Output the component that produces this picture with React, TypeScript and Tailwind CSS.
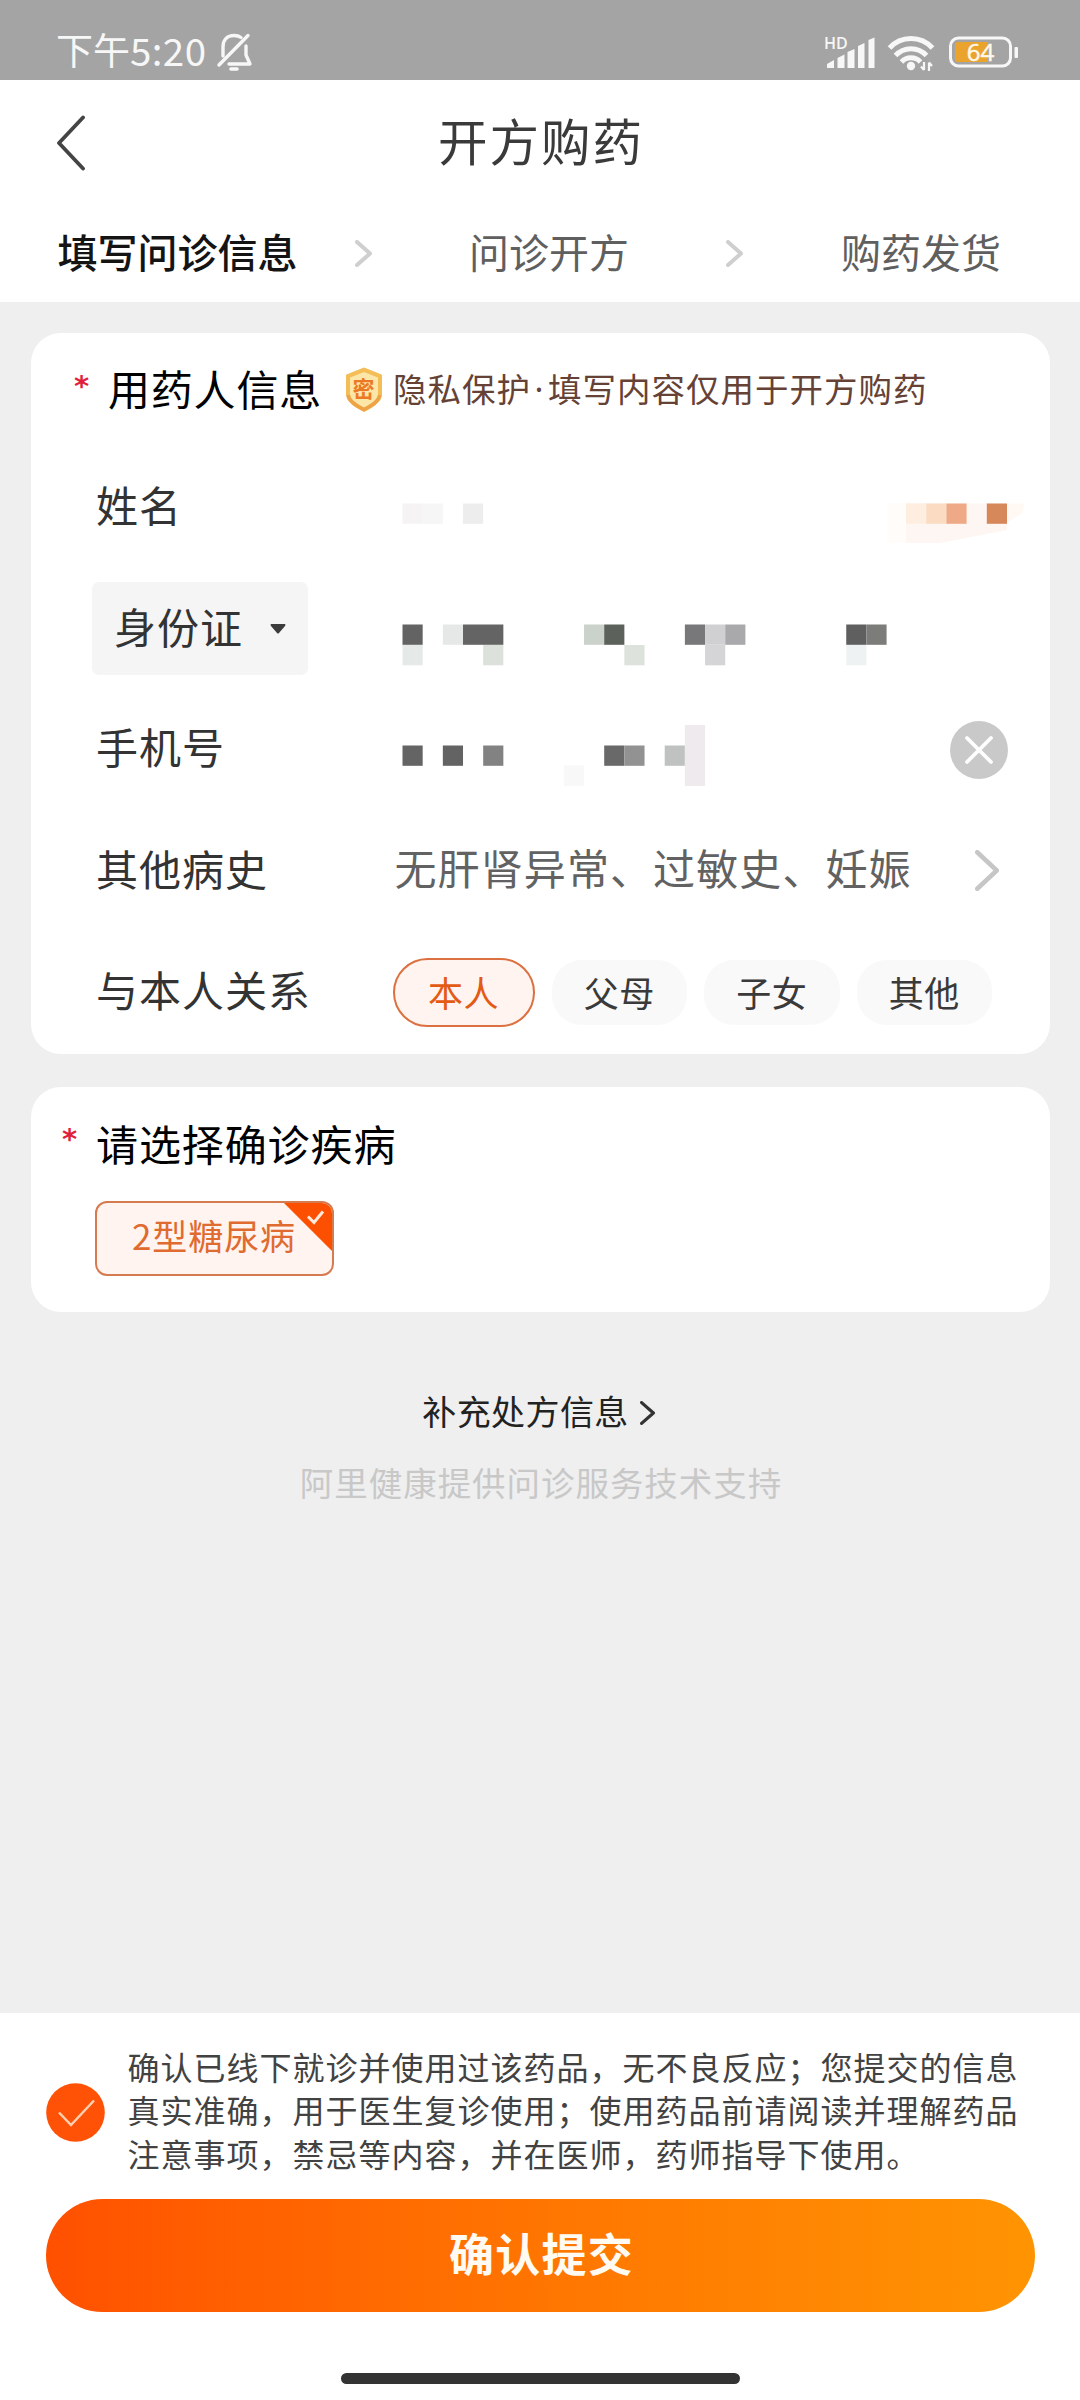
import type { ReactNode } from "react";

const CELL = 20.17;

type Cell = { col: number; y: number; fill: string; w?: number; h?: number };

const nameCells: Cell[] = [
  { col: 0, y: 60.5, fill: "#f5f3f4" },
  { col: 1, y: 60.5, fill: "#f6f6f6" },
  { col: 3, y: 60.5, fill: "#ededed" },
];

const idCells: Cell[] = [
  { col: 0, y: 59.5, fill: "#636363" },
  { col: 2, y: 59.5, fill: "#e6e8e8" },
  { col: 3, y: 59.5, fill: "#646464", w: 2 },
  { col: 9, y: 59.5, fill: "#cbd1cb" },
  { col: 10, y: 59.5, fill: "#5c625b" },
  { col: 14, y: 59.5, fill: "#78787b" },
  { col: 15, y: 59.5, fill: "#d0d0d3" },
  { col: 16, y: 59.5, fill: "#a9a9ab" },
  { col: 22, y: 59.5, fill: "#5f5f5f" },
  { col: 23, y: 59.5, fill: "#7c7c7b" },
  { col: 0, y: 80, fill: "#e5e9e8" },
  { col: 4, y: 80, fill: "#dce1dc" },
  { col: 11, y: 80, fill: "#dde2dd" },
  { col: 15, y: 80, fill: "#d5d5d8" },
  { col: 22, y: 80, fill: "#eff2f2" },
];

const phoneCells: Cell[] = [
  { col: 0, y: 59.5, fill: "#646464" },
  { col: 2, y: 59.5, fill: "#636363" },
  { col: 4, y: 59.5, fill: "#828282" },
  { col: 8, y: 79.5, fill: "#f8f8f8" },
  { col: 10, y: 59.5, fill: "#696969" },
  { col: 11, y: 59.5, fill: "#929292" },
  { col: 13, y: 59.5, fill: "#c0c2c2" },
  { col: 14, y: 39, fill: "#efeaed", h: 3 },
];

function Mosaic({ cells, width }: { cells: Cell[]; width: number }) {
  return (
    <svg width={width} height="121" viewBox={`0 0 ${width} 121`} className="shrink-0">
      {cells.map((c, i) => (
        <rect
          key={i}
          x={0.5 + c.col * CELL}
          y={c.y}
          width={(c.w ?? 1) * CELL}
          height={(c.h ?? 1) * 20.3}
          fill={c.fill}
        />
      ))}
    </svg>
  );
}

function Chevron({ w, h, color, stroke }: { w: number; h: number; color: string; stroke: number }) {
  const p = stroke / 2;
  return (
    <svg width={w} height={h} viewBox={`0 0 ${w} ${h}`} fill="none" className="shrink-0">
      <path
        d={`M${p} ${p}L${w - p - 1} ${h / 2}L${p} ${h - p}`}
        stroke={color}
        strokeWidth={stroke}
        strokeLinecap="round"
        strokeLinejoin="round"
      />
    </svg>
  );
}

function StatusBar() {
  return (
    <div className="flex h-[80px] shrink-0 items-start bg-[#a4a4a4] text-[#f7f7f7]">
      <div className="ml-[56px] mt-[28px] flex items-center whitespace-nowrap text-[37px] leading-[42px]">
        下午<span className="text-[38.5px] tracking-[0.4px]">5:20</span>
      </div>
      <svg className="ml-[10px] mt-[32px]" width="38" height="40" viewBox="0 0 38 40" fill="none" stroke="currentColor" strokeWidth="3.4" strokeLinecap="round" strokeLinejoin="round">
        <path d="M7 24V15C7 8 11 3.500 18 3.500C21 3.500 23 4 25 5.500" />
        <path d="M30 14V23L34 32H13" />
        <path d="M32 3.500L3 33" />
        <path d="M15 37H21" strokeWidth="3.600" />
      </svg>
      <div className="ml-auto mr-[59px] mt-[35px] flex items-start">
        <div className="flex w-[52px] items-start">
          <span className="-mt-[2px] w-0 whitespace-nowrap font-['Open_Sans'] text-[16px] font-semibold leading-[20px]">HD</span>
          <svg width="52" height="36" viewBox="0 0 52 36" fill="currentColor">
            <path d="M3 33V29L10 25V33Z" />
            <path d="M13.500 33V23L20.500 19.500V33Z" />
            <path d="M23.500 33V17L30.500 14V33Z" />
            <path d="M34 33V11L40.500 8V33Z" />
            <path d="M44.500 33V5L50.500 2.500V33Z" />
          </svg>
        </div>
        <svg className="ml-[11px]" width="50" height="38" viewBox="0 0 50 38" fill="none" stroke="currentColor" strokeWidth="5">
          <path d="M2.500 13A29 29 0 0 1 45.500 13" />
          <path d="M8.500 20.500A21 21 0 0 1 39.500 20.500" />
          <path d="M14.500 27A13 13 0 0 1 33.500 27" />
          <circle cx="24" cy="31" r="4.200" fill="currentColor" stroke="none" />
          <path d="M37 27V35M34 31.500L37 35M42 36V27.500M45 31L42 27.500" strokeWidth="2.200" />
        </svg>
        <svg className="ml-[12px] overflow-visible" width="72" height="34" viewBox="0 0 72 34" fill="none">
          <rect x="1.500" y="3" width="60" height="28" rx="8" stroke="#f7f7f7" strokeWidth="3" />
          <path d="M9 7H39V27H9Q6 27 6 24V10Q6 7 9 7Z" fill="#eaa32d" />
          <rect x="65.500" y="12" width="3.500" height="11" rx="1" fill="#f7f7f7" />
          <text x="31.500" y="26" fontSize="24" textAnchor="middle" fill="#fff8e8" stroke="#fff8e8" strokeWidth="0.500" fontFamily="Open Sans, sans-serif">64</text>
        </svg>
      </div>
    </div>
  );
}

function Header() {
  return (
    <div className="h-[222px] shrink-0 bg-white">
      <div className="grid h-[122px] grid-cols-[1fr_auto_1fr] items-center">
        <svg className="ml-[56px] mt-[4px]" width="30" height="56" viewBox="0 0 30 56" fill="none">
          <path d="M27 2.500L3 28L27 53.500" stroke="#444" strokeWidth="3.800" strokeLinecap="round" strokeLinejoin="round" />
        </svg>
        <h1 className="-mt-[2px] ml-[2px] text-[49.500px] leading-[60px] tracking-[2px] text-[#3a3a3a]">开方购药</h1>
      </div>
      <div className="flex h-[98px] items-center whitespace-nowrap pl-[57.500px] text-[40px] text-[#5f5f5f]">
        <span className="w-[297.500px] font-medium text-[#141414]">填写问诊信息</span>
        <span className="mt-[5px] w-[114px]"><Chevron w={18} h={27} color="#cfcfcf" stroke={4} /></span>
        <span className="w-[257px]">问诊开方</span>
        <span className="mt-[5px] w-[115px]"><Chevron w={18} h={27} color="#cfcfcf" stroke={4} /></span>
        <span>购药发货</span>
      </div>
    </div>
  );
}

function Row({ label, children }: { label: ReactNode; children: ReactNode }) {
  return (
    <div className="flex h-[121.4px] items-center whitespace-nowrap">
      <div className="w-[305px] shrink-0 pl-[65px] text-[42px] leading-[60px] tracking-[1px] text-[#333]">{label}</div>
      {children}
    </div>
  );
}

function Shield() {
  return (
    <svg className="mt-[4px] shrink-0" width="40" height="46" viewBox="0 0 40 46">
      <path d="M20 1L37.500 8V27C37.500 35 29 40 20 44.500C11 40 2.500 35 2.500 27V8Z" fill="#f4bd55" stroke="#f4bd55" strokeLinejoin="round" />
      <path d="M20 5L34 10.500V27C34 33 27 37 20 40.500C13 37 6 33 6 27V10.500Z" fill="#fce6a8" />
      <path d="M2.500 28C3 35 11 40 20 44.500C29 40 37 35 37.500 28L34 28C33 33 27 37 20 40.500C13 37 7 33 6 28Z" fill="#eea347" />
      <text x="20" y="30" fontSize="22" fontWeight="700" textAnchor="middle" fill="#ec7a25" fontFamily="Noto Sans CJK SC, sans-serif">密</text>
    </svg>
  );
}

const relations = ["父母", "子女", "其他"];

function PatientCard() {
  return (
    <section className="ml-[31px] mr-[30px] mt-[31px] h-[721px] shrink-0 rounded-[30px] bg-white">
      <div className="flex h-[110px] items-center whitespace-nowrap">
        <span className="-mt-[5px] ml-[43px] w-[34px] font-['DejaVu_Sans'] text-[29px] font-bold leading-[40px] text-[#e01f3d]">*</span>
        <h2 className="w-[216px] text-[42px] leading-[60px] tracking-[0.800px] text-black">用药人信息</h2>
        <div className="ml-[20px] flex items-center text-[33.500px] leading-[48px] tracking-[1px] text-[#664236]">
          <Shield />
          <span className="ml-[9px]">隐私保护</span>
          <span className="w-[17px] text-center font-['Noto_Sans']">·</span>
          <span>填写内容仅用于开方购药</span>
        </div>
      </div>
      <Row label="姓名">
        <div className="flex pl-[66px]">
          <Mosaic cells={nameCells} width={470} />
          <svg width="160" height="121" viewBox="872 0 160 121">
            <path d="M887 60.500H1007V84L960 92L906 100H887Z" fill="#fffcfa" />
            <path d="M906 60.500H1007V87L940 100H906Z" fill="#fef6f2" />
            <path d="M1007 60.500H1025L1022 70L1007 80Z" fill="#fff8f3" />
            <rect x="906" y="60.500" width="20.200" height="20.300" fill="#feeee0" />
            <rect x="926.200" y="60.500" width="20.200" height="20.300" fill="#fbdcc2" />
            <rect x="946.400" y="60.500" width="20.200" height="20.300" fill="#eeaa87" />
            <rect x="986.800" y="60.500" width="20.200" height="20.300" fill="#d6885b" />
          </svg>
        </div>
      </Row>
      <div className="flex h-[121.4px] items-center whitespace-nowrap">
        <div className="w-[371px] shrink-0 pl-[61px]">
          <button className="mt-[7px] flex h-[93px] w-[216px] items-center rounded-[7px] bg-[#f5f5f5] pl-[22px] text-[42px] tracking-[1px] text-[#333]">
            <span className="-mt-[7px]">身份证</span>
            <svg className="ml-[27px]" width="16" height="10" viewBox="0 0 16 10">
              <path d="M1 0H15Q16 1 15 2L9 9Q8 10 7 9L1 2Q0 1 1 0Z" fill="#3c3c3c" />
            </svg>
          </button>
        </div>
        <Mosaic cells={idCells} width={500} />
      </div>
      <Row label="手机号">
        <div className="flex items-center pl-[66px]">
          <Mosaic cells={phoneCells} width={548} />
          <svg className="mt-[7px]" width="58" height="58" viewBox="0 0 58 58">
            <circle cx="29" cy="29" r="29" fill="#c9c9c9" />
            <path d="M17 17L41 41M41 17L17 41" stroke="#fff" strokeWidth="3.800" strokeLinecap="round" />
          </svg>
        </div>
      </Row>
      <Row label="其他病史">
        <div className="flex items-center pl-[58.500px]">
          <span className="-mt-[2px] w-[580.500px] text-[42px] leading-[60px] tracking-[1.100px] text-[#626262]">无肝肾异常、过敏史、妊娠</span>
          <span className="mt-[6px]"><Chevron w={25} h={41} color="#c6c6c6" stroke={4.5} /></span>
        </div>
      </Row>
      <Row label="与本人关系">
        <div className="flex items-center gap-[17px] pl-[56.500px] pt-[7px] text-[35px] leading-[50px] tracking-[0.500px]">
          <button className="flex h-[69px] w-[142px] items-center justify-center rounded-full border-[2.500px] border-[#dc7040] bg-[#fff4ef] pb-[2px] text-[#e35a14]">本人</button>
          {relations.map((r) => (
            <button key={r} className="flex h-[65px] w-[135.500px] items-center justify-center rounded-[30px] bg-[#f9f9f9] pb-[2px] text-[#3a3a3a]">{r}</button>
          ))}
        </div>
      </Row>
    </section>
  );
}

function DiseaseCard() {
  return (
    <section className="ml-[31px] mr-[30px] mt-[33px] h-[225px] shrink-0 rounded-[30px] bg-white">
      <div className="flex h-[114px] items-center">
        <span className="-mt-[10px] ml-[31px] w-[34px] font-['DejaVu_Sans'] text-[29px] font-bold leading-[40px] text-[#e01f3d]">*</span>
        <h2 className="-mt-[3px] text-[42px] leading-[60px] tracking-[0.900px] text-black">请选择确诊疾病</h2>
      </div>
      <button className="relative ml-[64px] flex h-[75px] w-[239px] items-center overflow-hidden rounded-[12px] border-2 border-[#d67a50] bg-[#fff4ef] pb-[6px] pl-[35px] text-[35px] tracking-[0.900px] text-[#df6b30]">
        2型糖尿病
        <svg className="absolute right-0 top-0" width="48" height="48" viewBox="0 0 48 48" fill="none">
          <path d="M0 0H48V48Z" fill="#fc5000" />
          <path d="M24 13.500L30 19.500L39 8.500" stroke="#ffe9dc" strokeWidth="3" />
        </svg>
      </button>
    </section>
  );
}

function Footer() {
  return (
    <footer className="mt-auto flex h-[387px] shrink-0 flex-col bg-white">
      <div className="flex">
        <svg className="ml-[46px] mt-[70px] shrink-0" width="59" height="59" viewBox="0 0 59 59" fill="none">
          <circle cx="29.500" cy="29.500" r="29.300" fill="#ff5206" />
          <path d="M13 29.500L25 42L48 17.500" stroke="#ffcfae" strokeWidth="2.500" />
        </svg>
        <p className="ml-[22.500px] mt-[32px] whitespace-nowrap text-[32px] leading-[43.400px] tracking-[1px] text-[#424242]">
          确认已线下就诊并使用过该药品，无不良反应；您提交的信息<br />
          真实准确，用于医生复诊使用；使用药品前请阅读并理解药品<br />
          注意事项，禁忌等内容，并在医师，药师指导下使用。
        </p>
      </div>
      <button className="ml-[46px] mt-[23.800px] flex h-[113px] w-[989px] items-center justify-center rounded-full bg-linear-to-r from-[#ff5000] to-[#ff9402] pb-[5px] pl-[2px] text-[45px] font-bold tracking-[1.300px] text-[#fffaf2]">
        确认提交
      </button>
      <div className="mx-auto mt-[61px] h-[11px] w-[399px] rounded-full bg-[#333]" />
    </footer>
  );
}

export default function App() {
  return (
    <div className="flex h-[2400px] w-[1080px] flex-col overflow-hidden bg-[#efefef] font-['Noto_Sans_CJK_SC',sans-serif]">
      <StatusBar />
      <Header />
      <PatientCard />
      <DiseaseCard />
      <button className="mt-[75px] flex items-center justify-center gap-[11px] pr-[2px] text-[34px] leading-[48px] tracking-[0.400px] text-[#222]">
        补充处方信息
        <span className="mt-[3px]"><Chevron w={16} h={24} color="#333" stroke={3.2} /></span>
      </button>
      <p className="mt-[23px] pl-[2px] text-center text-[33.500px] leading-[48px] tracking-[0.950px] text-[#c8c8c8]">阿里健康提供问诊服务技术支持</p>
      <Footer />
    </div>
  );
}
